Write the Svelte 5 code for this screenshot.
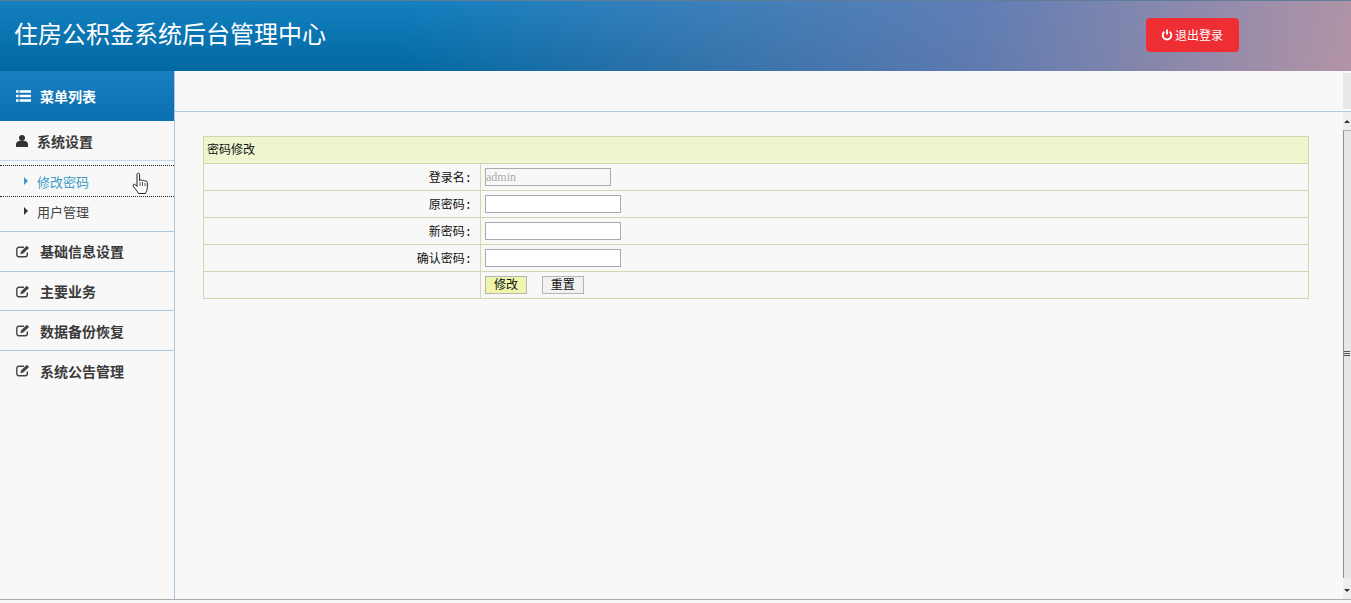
<script>
  const fields = [
    { label: '原密码:' },
    { label: '新密码:' },
    { label: '确认密码:' },
  ];

  const menus = ['基础信息设置', '主要业务', '数据备份恢复', '系统公告管理'];
</script>

{#snippet editIcon()}
  <svg class="edit" viewBox="0 0 14 13" width="14" height="13">
    <path d="M11.300 7.500v2.300A2 2 0 0 1 9.300 11.800H2.800a2 2 0 0 1-2-2V4.300a2 2 0 0 1 2-2H8" fill="none" stroke="#444" stroke-width="1.400" />
    <path d="M4.300 9.300l.7-2.800L10.800.7l2.300 2.200L7.200 8.600z" fill="#444" />
  </svg>
{/snippet}

<div class="page">
  <header class="top">
    <h1>住房公积金系统后台管理中心</h1>
    <button class="logout">
      <svg viewBox="0 0 12 12" width="12" height="12">
        <path d="M3.300 2.800a4.300 4.300 0 1 0 5.400 0" fill="none" stroke="#fff" stroke-width="1.900" />
        <path d="M6 .5v5" stroke="#fff" stroke-width="1.900" />
      </svg>
      退出登录
    </button>
  </header>

  <div class="body">
    <aside class="side">
      <div class="side-title">
        <svg viewBox="0 0 15 12" width="15" height="12">
          <path d="M0 1.500h2.600M3.600 1.500H15M0 6h2.600M3.600 6H15M0 10.500h2.600M3.600 10.500H15" stroke="#fff" stroke-width="2.600" />
        </svg>
        <span>菜单列表</span>
      </div>

      <div class="group first">
        <svg class="user" viewBox="0 0 12 12" width="12" height="12">
          <circle cx="6" cy="3" r="3" fill="#333" />
          <path d="M0 12V9.200C0 7.300 1.600 6 3.300 6h5.400C10.400 6 12 7.300 12 9.200V12z" fill="#333" />
        </svg>
        <span>系统设置</span>
      </div>

      <ul class="sub">
        <li class="active"><i></i>修改密码</li>
        <li><i></i>用户管理</li>
      </ul>

      {#each menus as menu}
        <div class="group">
          {@render editIcon()}
          <span>{menu}</span>
        </div>
      {/each}

      <svg class="cursor" viewBox="0 0 18 24" width="18" height="24">
        <path d="M5 2.500c0-1.800 2.600-1.800 2.600 0v6.200c.5-1 2.400-1 2.700.2.600-.9 2.300-.8 2.600.4.700-.7 2.400-.4 2.400 1.200v5c0 3-1.200 4-1.800 6H6.500C5.500 19 2.800 17 1.300 14.200c-.8-1.600 1-2.600 2.100-1.500L5 14.500z" fill="#fff" stroke="#222" stroke-width="1" />
        <path d="M8 10v4M10.500 10v4M13 11v3" stroke="#222" stroke-width=".8" />
      </svg>
    </aside>

    <main class="main">
      <div class="crumb">
        <div class="crumb-tab"></div>
      </div>

      <div class="frame">
        <div class="content">
          <table>
            <thead>
              <tr><th colspan="2">密码修改</th></tr>
            </thead>
            <tbody>
              <tr>
                <td class="label">登录名:</td>
                <td><input class="short" value="admin" disabled /></td>
              </tr>
              {#each fields as field}
                <tr>
                  <td class="label">{field.label}</td>
                  <td><input type="password" /></td>
                </tr>
              {/each}
              <tr>
                <td class="label"></td>
                <td>
                  <button class="btn save">修改</button>
                  <button class="btn reset">重置</button>
                </td>
              </tr>
            </tbody>
          </table>
        </div>

        <div class="scroll">
          <span class="arrow up"></span>
          <div class="track"><span class="grip"></span></div>
          <span class="arrow down"></span>
        </div>
      </div>
    </main>
  </div>
</div>

<style>
  :global(body) {
    margin: 0;
    background: #f8f8f8;
  }

  .page {
    display: flex;
    flex-direction: column;
    height: 603px;
    padding-bottom: 3px;
    overflow: hidden;
    font-family: "Noto Sans CJK SC", "Liberation Sans", sans-serif;
    color: #333;
    box-sizing: border-box;
  }

  .top {
    flex: none;
    display: flex;
    align-items: center;
    justify-content: space-between;
    height: 71px;
    padding: 0 112px 3px 14px;
    box-sizing: border-box;
    border-top: 1px solid #5f7d96;
    background: linear-gradient(105deg, rgba(0, 109, 170, 0) 0%, rgba(0, 109, 170, 0) 30%, rgba(116, 126, 178, .8) 72%, #b394a6 100%),
      linear-gradient(180deg, #1480c0 0%, #0068a2 100%);
  }

  .top h1 {
    margin: 0 0 3px;
    font-size: 24px;
    font-weight: 400;
    color: #fff;
    line-height: 1;
  }

  .logout {
    display: flex;
    align-items: center;
    gap: 2px;
    width: 93px;
    height: 34px;
    padding: 0 0 0 15px;
    box-sizing: border-box;
    border: none;
    border-radius: 4px;
    background: #ee2e33;
    color: #fff;
    font: 400 12px "Noto Sans CJK SC", sans-serif;
  }

  .body {
    flex: 1;
    display: flex;
    min-height: 0;
    border-bottom: 1px solid #b3aaac;
  }

  .side {
    position: relative;
    flex: none;
    width: 175px;
    box-sizing: border-box;
    border-right: 1px solid #abc6dd;
    background: #f8f8f8;
  }

  .side-title {
    display: flex;
    align-items: center;
    gap: 9px;
    height: 50px;
    padding: 0 0 0 16px;
    box-sizing: border-box;
    background: linear-gradient(180deg, #1a7fc0 0%, #0a70b2 100%);
    color: #fff;
    font-size: 14px;
    font-weight: 700;
  }

  .group {
    display: flex;
    align-items: center;
    gap: 10px;
    height: 39.700px;
    padding-left: 16px;
    box-sizing: border-box;
    border-bottom: 1px solid #abc6dd;
    font-size: 14px;
    font-weight: 700;
    color: #3a3a3a;
  }

  .group:last-of-type {
    border-bottom: none;
  }

  .group.first {
    height: 40px;
    gap: 9px;
    border-bottom: 1px solid #c5d5e3;
  }

  .sub {
    margin: 0;
    padding: 4px 0 0;
    list-style: none;
    height: 71px;
    border-bottom: 1px solid #abc6dd;
    box-sizing: border-box;
  }

  .sub li {
    display: flex;
    align-items: center;
    height: 30px;
    padding: 0 0 2px 24px;
    box-sizing: border-box;
    font-size: 13px;
    color: #444;
  }

  .sub li i {
    width: 0;
    height: 0;
    margin-right: 9px;
    border-left: 4px solid #333;
    border-top: 4px solid transparent;
    border-bottom: 4px solid transparent;
  }

  .sub .active {
    border-top: 1px dotted #222;
    border-bottom: 1px dotted #222;
    height: 32px;
    padding-bottom: 0;
    color: #3a9cc4;
  }

  .sub .active i {
    border-left-color: #3a9cc4;
  }

  .cursor {
    position: absolute;
    left: 132px;
    top: 101px;
  }

  .main {
    flex: 1;
    min-width: 0;
    display: flex;
    flex-direction: column;
  }

  .crumb {
    flex: none;
    display: flex;
    justify-content: flex-end;
    height: 41px;
    box-sizing: border-box;
    padding: 2px 0 0;
    border-bottom: 1px solid #a9cde6;
    margin-left: -1px;
  }

  .crumb-tab {
    width: 8px;
    height: 36px;
    background: #e8e8e8;
  }

  .frame {
    flex: 1;
    display: flex;
    min-height: 0;
  }

  .content {
    flex: 1;
    min-width: 0;
    padding: 24px 34px 0 28px;
  }

  table {
    width: 100%;
    border-collapse: collapse;
    font-size: 12px;
    color: #111;
  }

  th,
  td {
    border: 1px solid #d3d7ad;
    height: 27px;
    padding: 0 4px 1px;
    box-sizing: border-box;
    font-weight: 400;
  }

  th {
    text-align: left;
    background: #eff6cf;
    font-size: 12px;
    padding: 0 3px 4px;
  }

  td.label {
    width: 277px;
    padding-right: 8px;
    text-align: right;
    font-family: "Liberation Mono", "Noto Sans CJK SC", monospace;
  }

  input {
    display: block;
    width: 136px;
    height: 18px;
    padding: 0;
    margin-top: 1px;
    box-sizing: border-box;
    border: 1px solid #a9a9b0;
    background: #fff;
    font: 12px "Liberation Serif", serif;
  }

  input.short {
    width: 126px;
    background: #f8f8f8;
    color: #aaa;
  }

  .btn {
    width: 42px;
    height: 18px;
    padding: 0 0 2px;
    margin: 1px 12px 0 0;
    box-sizing: border-box;
    border: 1px solid #b5b5b5;
    background: #f1f1f1;
    color: #111;
    font: 12px "Noto Sans CJK SC", sans-serif;
    line-height: 14px;
  }

  .btn.save {
    background: #f0f5ad;
  }

  .scroll {
    flex: none;
    display: flex;
    flex-direction: column;
    position: relative;
    width: 8px;
    box-sizing: border-box;
    background: #eeeeee;
  }

  .track {
    position: relative;
    margin: 18px 0 21px;
    flex: 1;
    border-left: 1px solid #909090;
    border-top: 1px solid #b0b0b0;
    background: #e6e6e6;
  }

  .arrow {
    position: absolute;
    left: 1px;
    width: 0;
    height: 0;
    border-left: 3px solid transparent;
    border-right: 3px solid transparent;
  }

  .arrow.up {
    top: 8px;
    border-bottom: 3px solid #333;
  }

  .arrow.down {
    bottom: 7px;
    border-top: 3px solid #333;
  }

  .grip {
    position: absolute;
    left: 0;
    top: 220px;
    width: 6px;
    height: 5px;
    background: repeating-linear-gradient(180deg, #555 0 1px, transparent 1px 2px);
  }
</style>
